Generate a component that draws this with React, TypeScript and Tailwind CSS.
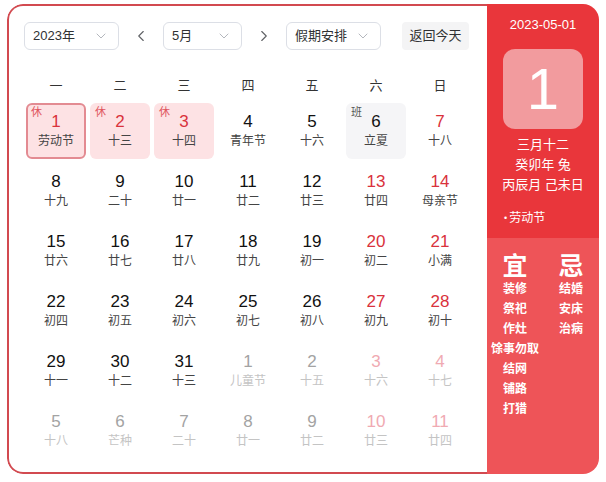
import React from "react";
import { ChevronDown, ChevronLeft, ChevronRight } from "lucide-react";

type Cell = {
  d: number;
  l: string;
  kind: "cur" | "other";
  red?: boolean;
  tag?: "休" | "班";
  sel?: boolean;
};

const rows: Cell[][] = [
  [
    { d: 1, l: "劳动节", kind: "cur", red: true, tag: "休", sel: true },
    { d: 2, l: "十三", kind: "cur", red: true, tag: "休" },
    { d: 3, l: "十四", kind: "cur", red: true, tag: "休" },
    { d: 4, l: "青年节", kind: "cur" },
    { d: 5, l: "十六", kind: "cur" },
    { d: 6, l: "立夏", kind: "cur", tag: "班" },
    { d: 7, l: "十八", kind: "cur", red: true },
  ],
  [
    { d: 8, l: "十九", kind: "cur" },
    { d: 9, l: "二十", kind: "cur" },
    { d: 10, l: "廿一", kind: "cur" },
    { d: 11, l: "廿二", kind: "cur" },
    { d: 12, l: "廿三", kind: "cur" },
    { d: 13, l: "廿四", kind: "cur", red: true },
    { d: 14, l: "母亲节", kind: "cur", red: true },
  ],
  [
    { d: 15, l: "廿六", kind: "cur" },
    { d: 16, l: "廿七", kind: "cur" },
    { d: 17, l: "廿八", kind: "cur" },
    { d: 18, l: "廿九", kind: "cur" },
    { d: 19, l: "初一", kind: "cur" },
    { d: 20, l: "初二", kind: "cur", red: true },
    { d: 21, l: "小满", kind: "cur", red: true },
  ],
  [
    { d: 22, l: "初四", kind: "cur" },
    { d: 23, l: "初五", kind: "cur" },
    { d: 24, l: "初六", kind: "cur" },
    { d: 25, l: "初七", kind: "cur" },
    { d: 26, l: "初八", kind: "cur" },
    { d: 27, l: "初九", kind: "cur", red: true },
    { d: 28, l: "初十", kind: "cur", red: true },
  ],
  [
    { d: 29, l: "十一", kind: "cur" },
    { d: 30, l: "十二", kind: "cur" },
    { d: 31, l: "十三", kind: "cur" },
    { d: 1, l: "儿童节", kind: "other" },
    { d: 2, l: "十五", kind: "other" },
    { d: 3, l: "十六", kind: "other", red: true },
    { d: 4, l: "十七", kind: "other", red: true },
  ],
  [
    { d: 5, l: "十八", kind: "other" },
    { d: 6, l: "芒种", kind: "other" },
    { d: 7, l: "二十", kind: "other" },
    { d: 8, l: "廿一", kind: "other" },
    { d: 9, l: "廿二", kind: "other" },
    { d: 10, l: "廿三", kind: "other", red: true },
    { d: 11, l: "廿四", kind: "other", red: true },
  ],
];

const weekdays = ["一", "二", "三", "四", "五", "六", "日"];
const yi = ["装修", "祭祀", "作灶", "馀事勿取", "结网", "铺路", "打猎"];
const ji = ["结婚", "安床", "治病"];

function Select({ label, w }: { label: string; w: string }) {
  return (
    <div
      className={`${w} h-[28px] border border-[#dcdfe6] rounded-[6px] flex items-center justify-between pl-[8px] pr-[9px] text-[13px] text-[#303133] bg-white`}
    >
      <span>{label}</span>
      <ChevronDown size={16} strokeWidth={1.3} color="#a8abb2" />
    </div>
  );
}

function DayCell({ c }: { c: Cell }) {
  let bg = "";
  if (c.tag === "休") bg = "bg-[#fde2e4]";
  if (c.tag === "班") bg = "bg-[#f5f5f7]";
  const border = c.sel ? "border-2 border-[#e38b92]" : "";
  let numColor = "text-[#111111]";
  let lunColor = "text-[#444444]";
  if (c.kind === "cur" && c.red) numColor = "text-[#d9323c]";
  if (c.kind === "other") {
    numColor = c.red ? "text-[#f0aab2]" : "text-[#a3a3a3]";
    lunColor = "text-[#c4c4c4]";
  }
  return (
    <div className="p-[2px] h-[60px]">
      <div
        className={`relative h-full w-full rounded-[6px] flex flex-col items-center justify-center ${bg} ${border}`}
      >
        {c.tag && (
          <span
            className={`absolute ${c.sel ? "left-[3px] top-[0px]" : "left-[5px] top-[2px]"} text-[11px] leading-[14px] ${
              c.tag === "休" ? "text-[#e0555e]" : "text-[#555555]"
            }`}
          >
            {c.tag}
          </span>
        )}
        <span className={`text-[17px] leading-[20px] ${numColor}`}>{c.d}</span>
        <span className={`text-[12px] leading-[18px] ${lunColor}`}>{c.l}</span>
      </div>
    </div>
  );
}

export default function App() {
  return (
    <div
      className="w-[606px] h-[482px] bg-white pt-[4px] pl-[7px]"
      style={{ fontFamily: '"Liberation Sans", "Noto Sans CJK SC", sans-serif' }}
    >
      <div className="w-[592px] h-[470px] rounded-[16px] overflow-hidden flex">
        {/* Left calendar */}
        <div className="flex-1 border-2 border-r-0 border-[#d24a50] rounded-l-[16px] bg-white pt-[16px] pl-[15px]">
          <div className="flex items-center h-[28px]">
            <Select label="2023年" w="w-[95px]" />
            <div className="w-[44px] flex justify-center">
              <ChevronLeft size={18} strokeWidth={1.5} color="#606266" />
            </div>
            <Select label="5月" w="w-[79px]" />
            <div className="w-[44px] flex justify-center">
              <ChevronRight size={18} strokeWidth={1.5} color="#606266" />
            </div>
            <Select label="假期安排" w="w-[95px]" />
            <div className="ml-[21px] w-[67px] h-[28px] rounded-[4px] bg-[#f4f4f5] flex items-center justify-center text-[13px] text-[#303133]">
              返回今天
            </div>
          </div>
          <div className="mt-[20px] grid grid-cols-[repeat(7,64px)] h-[31px] items-center">
            {weekdays.map((w) => (
              <div key={w} className="text-center text-[13px] text-[#333333]">
                {w}
              </div>
            ))}
          </div>
          <div className="grid grid-cols-[repeat(7,64px)]">
            {rows.flat().map((c, i) => (
              <DayCell key={i} c={c} />
            ))}
          </div>
        </div>
        {/* Right panel */}
        <div className="w-[112px] flex flex-col text-white">
          <div className="bg-[#e9363b] flex flex-col items-center pt-[12px] pb-[11px]">
            <div className="text-[13px] leading-[18px]">2023-05-01</div>
            <div className="mt-[15px] w-[80px] h-[80px] rounded-[12px] bg-[#f29b9e] flex items-center justify-center text-[58px] leading-none">
              1
            </div>
            <div className="mt-[6px] text-[13px] leading-[20px]">三月十二</div>
            <div className="text-[13px] leading-[20px]">癸卯年 兔</div>
            <div className="text-[13px] leading-[20px]">丙辰月 己未日</div>
            <div className="mt-[14px] self-start pl-[17px] text-[12px] leading-[18px] flex items-center">
              <span className="text-[9px] mr-[2px]">•</span>劳动节
            </div>
          </div>
          <div className="flex-1 bg-[#ee5458] grid grid-cols-2 content-start pt-[15px]">
            <div className="flex flex-col items-center">
              <div className="text-[25px] leading-[26px] font-bold">宜</div>
              {yi.map((t) => (
                <div key={t} className="text-[12px] leading-[20px] font-semibold whitespace-nowrap">
                  {t}
                </div>
              ))}
            </div>
            <div className="flex flex-col items-center">
              <div className="text-[25px] leading-[26px] font-bold">忌</div>
              {ji.map((t) => (
                <div key={t} className="text-[12px] leading-[20px] font-semibold">
                  {t}
                </div>
              ))}
            </div>
          </div>
        </div>
      </div>
    </div>
  );
}
